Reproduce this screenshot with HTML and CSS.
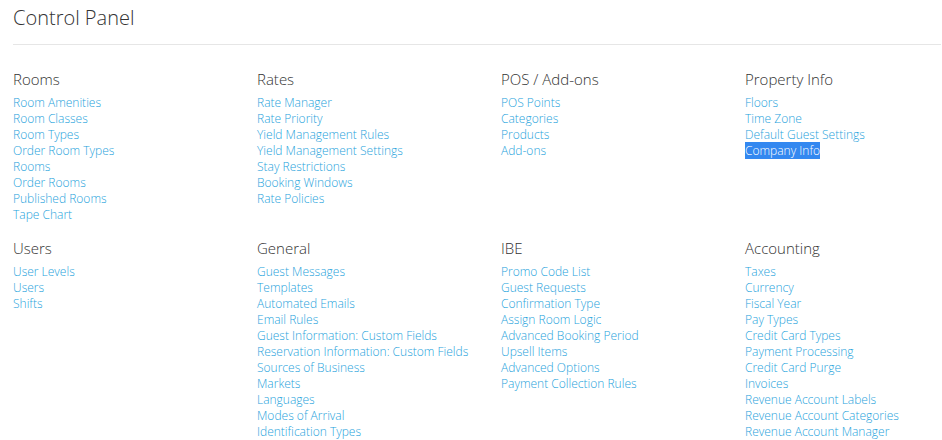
FILE: index.html
```html
<!DOCTYPE html>
<html>
<head>
<meta charset="utf-8">
<link rel="stylesheet" href="styles.css">
</head>
<body>
<div class="page">
  <h1 class="title">Control Panel</h1>
  <div class="grid">
    <section class="group">
      <h2>Rooms</h2>
      <ul>
        <li><a href="#">Room Amenities</a></li>
        <li><a href="#">Room Classes</a></li>
        <li><a href="#">Room Types</a></li>
        <li><a href="#">Order Room Types</a></li>
        <li><a href="#">Rooms</a></li>
        <li><a href="#">Order Rooms</a></li>
        <li><a href="#">Published Rooms</a></li>
        <li><a href="#">Tape Chart</a></li>
      </ul>
    </section>
    <section class="group">
      <h2>Rates</h2>
      <ul>
        <li><a href="#">Rate Manager</a></li>
        <li><a href="#">Rate Priority</a></li>
        <li><a href="#">Yield Management Rules</a></li>
        <li><a href="#">Yield Management Settings</a></li>
        <li><a href="#">Stay Restrictions</a></li>
        <li><a href="#">Booking Windows</a></li>
        <li><a href="#">Rate Policies</a></li>
      </ul>
    </section>
    <section class="group">
      <h2>POS / Add-ons</h2>
      <ul>
        <li><a href="#">POS Points</a></li>
        <li><a href="#">Categories</a></li>
        <li><a href="#">Products</a></li>
        <li><a href="#">Add-ons</a></li>
      </ul>
    </section>
    <section class="group">
      <h2>Property Info</h2>
      <ul>
        <li><a href="#">Floors</a></li>
        <li><a href="#">Time Zone</a></li>
        <li><a href="#">Default Guest Settings</a></li>
        <li><a href="#" class="selected">Company Info</a></li>
      </ul>
    </section>
    <section class="group">
      <h2>Users</h2>
      <ul>
        <li><a href="#">User Levels</a></li>
        <li><a href="#">Users</a></li>
        <li><a href="#">Shifts</a></li>
      </ul>
    </section>
    <section class="group">
      <h2>General</h2>
      <ul>
        <li><a href="#">Guest Messages</a></li>
        <li><a href="#">Templates</a></li>
        <li><a href="#">Automated Emails</a></li>
        <li><a href="#">Email Rules</a></li>
        <li><a href="#">Guest Information: Custom Fields</a></li>
        <li><a href="#">Reservation Information: Custom Fields</a></li>
        <li><a href="#">Sources of Business</a></li>
        <li><a href="#">Markets</a></li>
        <li><a href="#">Languages</a></li>
        <li><a href="#">Modes of Arrival</a></li>
        <li><a href="#">Identification Types</a></li>
      </ul>
    </section>
    <section class="group">
      <h2>IBE</h2>
      <ul>
        <li><a href="#">Promo Code List</a></li>
        <li><a href="#">Guest Requests</a></li>
        <li><a href="#">Confirmation Type</a></li>
        <li><a href="#">Assign Room Logic</a></li>
        <li><a href="#">Advanced Booking Period</a></li>
        <li><a href="#">Upsell Items</a></li>
        <li><a href="#">Advanced Options</a></li>
        <li><a href="#">Payment Collection Rules</a></li>
      </ul>
    </section>
    <section class="group">
      <h2>Accounting</h2>
      <ul>
        <li><a href="#">Taxes</a></li>
        <li><a href="#">Currency</a></li>
        <li><a href="#">Fiscal Year</a></li>
        <li><a href="#">Pay Types</a></li>
        <li><a href="#">Credit Card Types</a></li>
        <li><a href="#">Payment Processing</a></li>
        <li><a href="#">Credit Card Purge</a></li>
        <li><a href="#">Invoices</a></li>
        <li><a href="#">Revenue Account Labels</a></li>
        <li><a href="#">Revenue Account Categories</a></li>
        <li><a href="#">Revenue Account Manager</a></li>
      </ul>
    </section>
  </div>
</div>
</body>
</html>
```

FILE: styles.css
```css
* { box-sizing: border-box; }
html, body { margin: 0; padding: 0; background: #fff; }
body {
  font-family: "Open Sans", "Liberation Sans", sans-serif;
  color: #333;
}
.page {
  padding: 4px 1px 0 13px;
}
.title {
  margin: 0;
  font-size: 20px;
  font-weight: 300;
  line-height: 28px;
  color: #333;
  padding-bottom: 12px;
  border-bottom: 1px solid #e6e6e6;
}
.grid {
  display: grid;
  grid-template-columns: 244px 244px 244px 1fr;
  row-gap: 13px;
  padding-top: 22px;
}
.group h2 {
  margin: 0 0 4px;
  font-size: 15px;
  font-weight: 300;
  line-height: 24px;
  color: #333;
}
.group ul {
  list-style: none;
  margin: 0;
  padding: 0;
}
.group li {
  font-size: 12px;
  font-weight: 300;
  line-height: 16px;
}
.group a {
  color: #1fa3dc;
  text-decoration: none;
}
.group a.selected {
  background: #3388f0;
  color: #fff;
}
```
